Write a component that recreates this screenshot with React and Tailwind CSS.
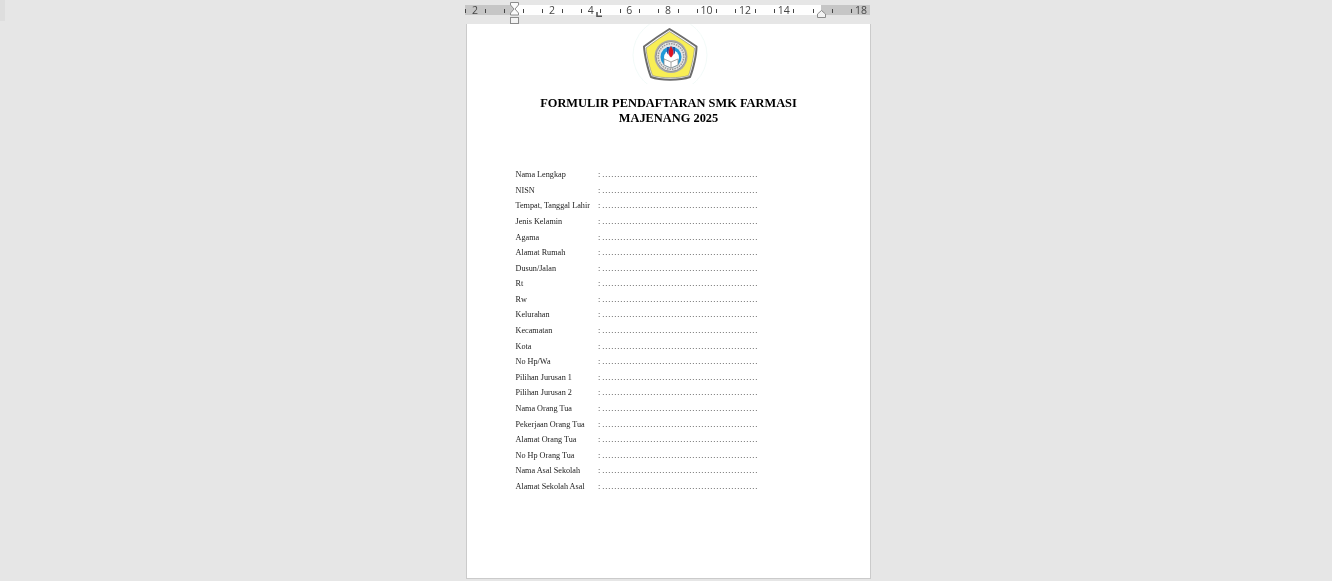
import React from "react";

const fields = [
  "Nama Lengkap", "NISN", "Tempat, Tanggal Lahir", "Jenis Kelamin", "Agama", "Alamat Rumah",
  "Dusun/Jalan", "Rt", "Rw", "Kelurahan", "Kecamatan", "Kota", "No Hp/Wa", "Pilihan Jurusan 1",
  "Pilihan Jurusan 2", "Nama Orang Tua", "Pekerjaan Orang Tua", "Alamat Orang Tua",
  "No Hp Orang Tua", "Nama Asal Sekolah", "Alamat Sekolah Asal",
];

const DOTS = ".".repeat(52);

// x of the zero mark and px per cm, in ruler coordinates
const ZERO = 48.5;
const CM = 19.3;
const numbers = [[-2, "2"], [2, "2"], [4, "4"], [6, "6"], [8, "8"], [10, "10"], [12, "12"], [14, "14"], [18, "18"]];
const ticks = [-2.5, -1.5, -0.5, 0.5, 1.5, 2.5, 3.5, 4.5, 5.5, 6.5, 7.5, 8.5, 9.5, 10.5, 11.5, 12.5, 13.5, 14.5, 15.5, 16.5, 17.5, 18.5];

const Ruler = () => (
  <svg width="405" height="24" className="block opacity-[0.99]">
    <rect x="0" y="5" width="405" height="10" fill="#ffffff" />
    <rect x="0" y="5" width="49" height="10" fill="#c6c6c6" />
    <rect x="356" y="5" width="49" height="10" fill="#c6c6c6" />
    {ticks.map((t) => (
      <rect key={t} x={Math.round(ZERO + t * CM)} y="9" width="1" height="4" fill="#444444" />
    ))}
    {numbers.map(([n, label]) => (
      <text
        key={n}
        x={ZERO + n * CM}
        y="14"
        textAnchor="middle"
        fontSize="10.5"
        fill="#444444"
        fontFamily="'Open Sans', sans-serif"
      >
        {label}
      </text>
    ))}
    {/* first line + hanging indent markers */}
    <path d="M45.5 2.500h8v2.500l-3.500 4 3.500 4v2h-8v-2l3.500-4-3.500-4z" fill="#fbfbfb" stroke="#8a8a8a" />
    <rect x="45.500" y="17.500" width="8" height="6" fill="#f4f4f4" stroke="#8a8a8a" />
    {/* right indent */}
    <path d="M352.500 17.500v-3.500l4-3.500 4 3.500v3.500z" fill="#f4f4f4" stroke="#8a8a8a" />
    {/* tab stop */}
    <path d="M132 12v4.200h5" fill="none" stroke="#555555" strokeWidth="1.600" />
  </svg>
);

// drawn in page coordinates so the numbers read off the reference directly
const Logo = () => (
  <svg width="80" height="70" viewBox="630 24 80 70" className="block">
    <circle cx="670" cy="55" r="37" fill="#ffffff" stroke="#f2faf8" />
    <path d="M669.500 29 C676 33 690 42 696.500 46.500 C696.500 55 693 70 690 77 C680 80.500 660 80.500 651 77 C648 70 644.500 55 644 46.500 C650 42 663 33 669.500 29z" fill="#ffffff" stroke="#6c6c6c" strokeWidth="2" strokeLinejoin="round" />
    <path d="M669.500 31.500 C676 35.500 688 43.500 694.500 48 C694 56 691 69 688.500 75.500 C679 78.500 661 78.500 652.500 75.500 C650 69 646.500 56 646 48 C652 43.500 663 35.500 669.500 31.500z" fill="#f8ee55" stroke="#8c8c8c" strokeWidth=".7" />
    <circle cx="671" cy="56.500" r="16.500" fill="#a9a9a9" />
    <circle cx="671" cy="56.500" r="15" fill="#e4e4e4" stroke="#8f8f8f" strokeWidth="1" />
    <circle cx="671" cy="56.500" r="12.800" fill="none" stroke="#999999" strokeWidth="1.500" strokeDasharray="1.500 1" />
    <circle cx="671" cy="57" r="10.500" fill="#1f9ad8" />
    <circle cx="671.500" cy="57.500" r="7.500" fill="#ffffff" />
    <path d="M667 47h2l-.5 8-1.500-2zM675 47h-2l.5 8 1.500-2z" fill="#2b4fa0" />
    <path d="M671 46c-2.500 3-3 7-1.500 10l1.500 1.500 1.500-1.500c1.500-3 1-7-1.500-10z" fill="#dd1422" />
    <path d="M664 59l7 3 7-3v6l-7 3-7-3z" fill="#ffffff" stroke="#8a8a8a" strokeWidth=".8" />
    <path d="M671 62v6" stroke="#8a8a8a" strokeWidth=".8" />
  </svg>
);

export default function App() {
  return (
    <div className="h-[581px] overflow-hidden bg-[#e6e6e6] pl-[465px] relative">
      <div className="absolute left-0 top-0 h-[21px] w-[5px] bg-[#dedede]" />
      <Ruler />
      <div
        className="ml-[1px] h-[555px] w-[405px] border-x border-b border-[#cbcbcb] bg-white text-black"
        style={{ fontFamily: "'Liberation Serif', serif" }}
      >
        <div className="ml-[163px] h-[60px] overflow-hidden blur-[0.3px]">
          <Logo />
        </div>
        <div className="pt-[11.500px] text-center text-[12.4px] leading-[15.500px] font-bold blur-[0.2px]">
          <div>FORMULIR PENDAFTARAN SMK FARMASI</div>
          <div>MAJENANG 2025</div>
        </div>
        <div className="pt-[41px] pl-[48.500px] text-[8.200px] text-[#222222] blur-[0.4px]">
          {fields.map((f) => (
            <div key={f} className="flex h-[15.600px] items-center whitespace-nowrap">
              <span className="w-[82.500px]">{f}</span>
              <span>
                : <span className="tracking-[0.95px]">{DOTS}</span>
              </span>
            </div>
          ))}
        </div>
      </div>
    </div>
  );
}
